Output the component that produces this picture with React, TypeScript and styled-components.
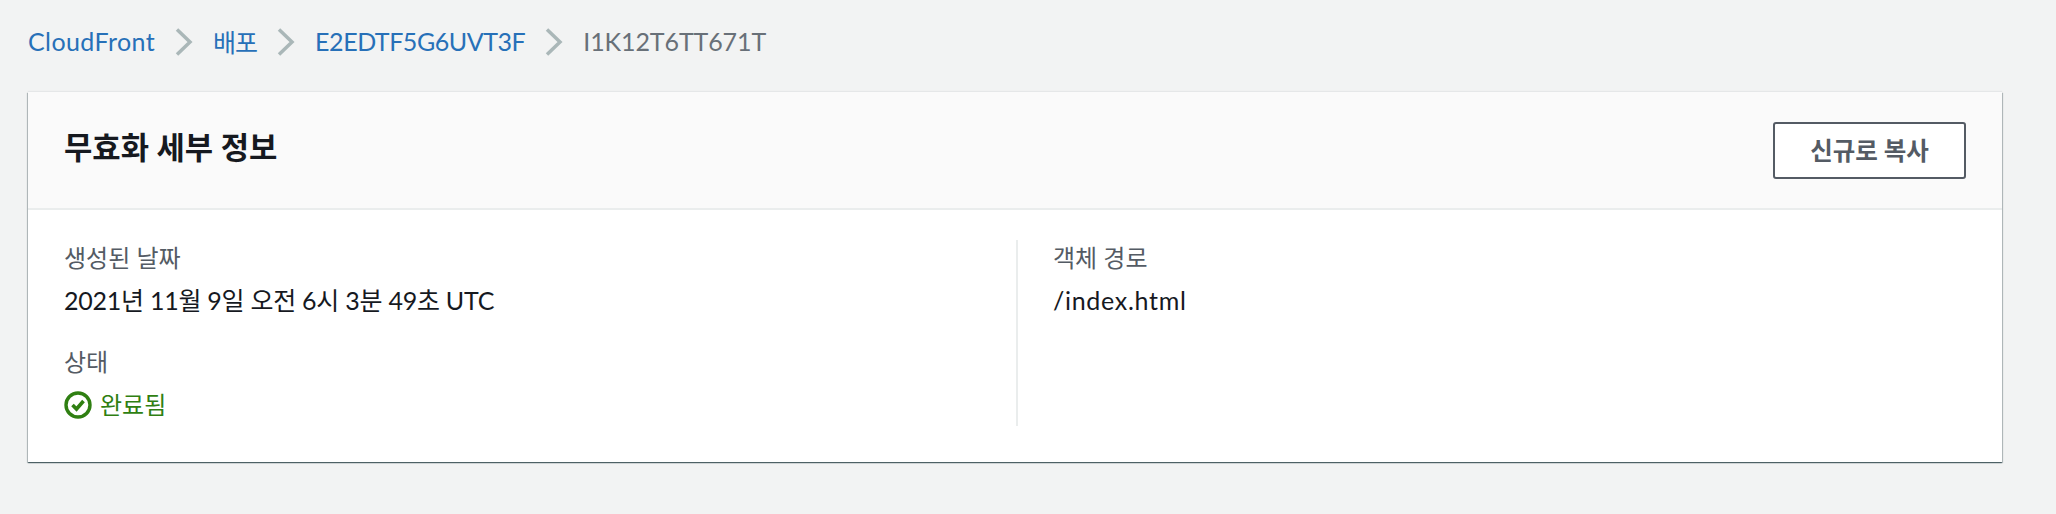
import styled, { createGlobalStyle } from 'styled-components';

const FONT = `Lato, "Noto Sans CJK KR", sans-serif`;

const GlobalStyle = createGlobalStyle`
  html, body {
    margin: 0;
    padding: 0;
    background: #f2f3f3;
  }
  body {
    font-family: ${FONT};
  }
`

const Page = styled.div`
  width: 2056px;
  height: 514px;
  box-sizing: border-box;
  padding: 20px 54px 0 28px;
  overflow: hidden;
`

const Breadcrumbs = styled.nav`
  display: flex;
  align-items: center;
  height: 42px;
  margin-bottom: 30px;
  font-size: 25px;
`

const Crumb = styled.a<{ $current?: boolean; $tracking?: string }>`
  color: ${(p) => (p.$current ? '#687078' : '#2770b8')};
  letter-spacing: ${(p) => p.$tracking || 'normal'};
  white-space: nowrap;
`

const Chevron = styled.svg`
  width: 18px;
  height: 28px;
  margin: 2px 20px 0 20px;
  flex: none;
`

const Card = styled.section`
  background: #fff;
  height: 370px;
  box-shadow: 0 1px 1px 0 rgba(0, 28, 36, 0.5), 1px 1px 1px 0 rgba(0, 28, 36, 0.2), -1px 1px 1px 0 rgba(0, 28, 36, 0.2), 0 -1px 1px 0 rgba(0, 28, 36, 0.05);
`

const CardHeader = styled.header`
  display: flex;
  justify-content: space-between;
  align-items: center;
  height: 118px;
  box-sizing: border-box;
  padding: 0 36px 0 36px;
  background: #fafafa;
  border-bottom: 2px solid #eaeded;
`

const Title = styled.h2`
  margin: 0 0 10px;
  font-size: 30.8px;
  font-weight: 700;
  color: #16191f;
`

const CopyButton = styled.button`
  width: 193px;
  height: 57px;
  box-sizing: border-box;
  background: #fff;
  border: 2px solid #545b64;
  border-radius: 3px;
  color: #545b64;
  font-family: ${FONT};
  font-size: 24.5px;
  font-weight: 700;
  padding: 0 0 2px;
`

const CardBody = styled.div`
  display: grid;
  grid-template-columns: 952px 1fr;
  padding: 30px 36px 0;
`

const Column = styled.div<{ $divided?: boolean }>`
  display: flex;
  flex-direction: column;
  gap: 26px;
  height: 186px;
  ${(p) => p.$divided && `
    border-left: 2px solid #eaeded;
    padding-left: 35px;
  `}
`

const Field = styled.div`
  display: flex;
  flex-direction: column;
  gap: 6px;
`

const Label = styled.div`
  color: #545b64;
  font-size: 24px;
  line-height: 36px;
`

const Value = styled.div<{ $tracking?: string }>`
  color: #16191f;
  font-size: 25px;
  line-height: 36px;
  letter-spacing: ${(p) => p.$tracking || 'normal'};
`

const Status = styled.div`
  display: flex;
  align-items: center;
  gap: 8px;
  margin-top: 1px;
  color: #2f7f12;
  font-size: 24px;
  line-height: 36px;
`

const ChevronIcon = () => (
  <Chevron viewBox="0 0 18 28" fill="none" stroke="#aab7b8" strokeWidth="3.5">
    <path d="M2 1.5l13 12.5L2 26.5" />
  </Chevron>
)

const App = () => {
  return (
    <Page>
      <GlobalStyle />
      <Breadcrumbs>
        <Crumb $tracking="0.4px">CloudFront</Crumb>
        <ChevronIcon />
        <Crumb $tracking="-1px">배포</Crumb>
        <ChevronIcon />
        <Crumb $tracking="-0.45px">E2EDTF5G6UVT3F</Crumb>
        <ChevronIcon />
        <Crumb $current $tracking="-0.1px">I1K12T6TT671T</Crumb>
      </Breadcrumbs>
      <Card>
        <CardHeader>
          <Title>무효화 세부 정보</Title>
          <CopyButton>신규로 복사</CopyButton>
        </CardHeader>
        <CardBody>
          <Column>
            <Field>
              <Label>생성된 날짜</Label>
              <Value $tracking="-0.25px">2021년 11월 9일 오전 6시 3분 49초 UTC</Value>
            </Field>
            <Field>
              <Label>상태</Label>
              <Status>
                <svg width="28" height="28" viewBox="0 0 28 28" fill="none" stroke="#2f7f12" strokeWidth="3.4">
                  <circle cx="14" cy="14" r="12" />
                  <path d="M8.5 14l4 4 7-8" strokeWidth="3.6" />
                </svg>
                완료됨
              </Status>
            </Field>
          </Column>
          <Column $divided>
            <Field>
              <Label>객체 경로</Label>
              <Value $tracking="0.7px">/index.html</Value>
            </Field>
          </Column>
        </CardBody>
      </Card>
    </Page>
  )
}

export default App;
